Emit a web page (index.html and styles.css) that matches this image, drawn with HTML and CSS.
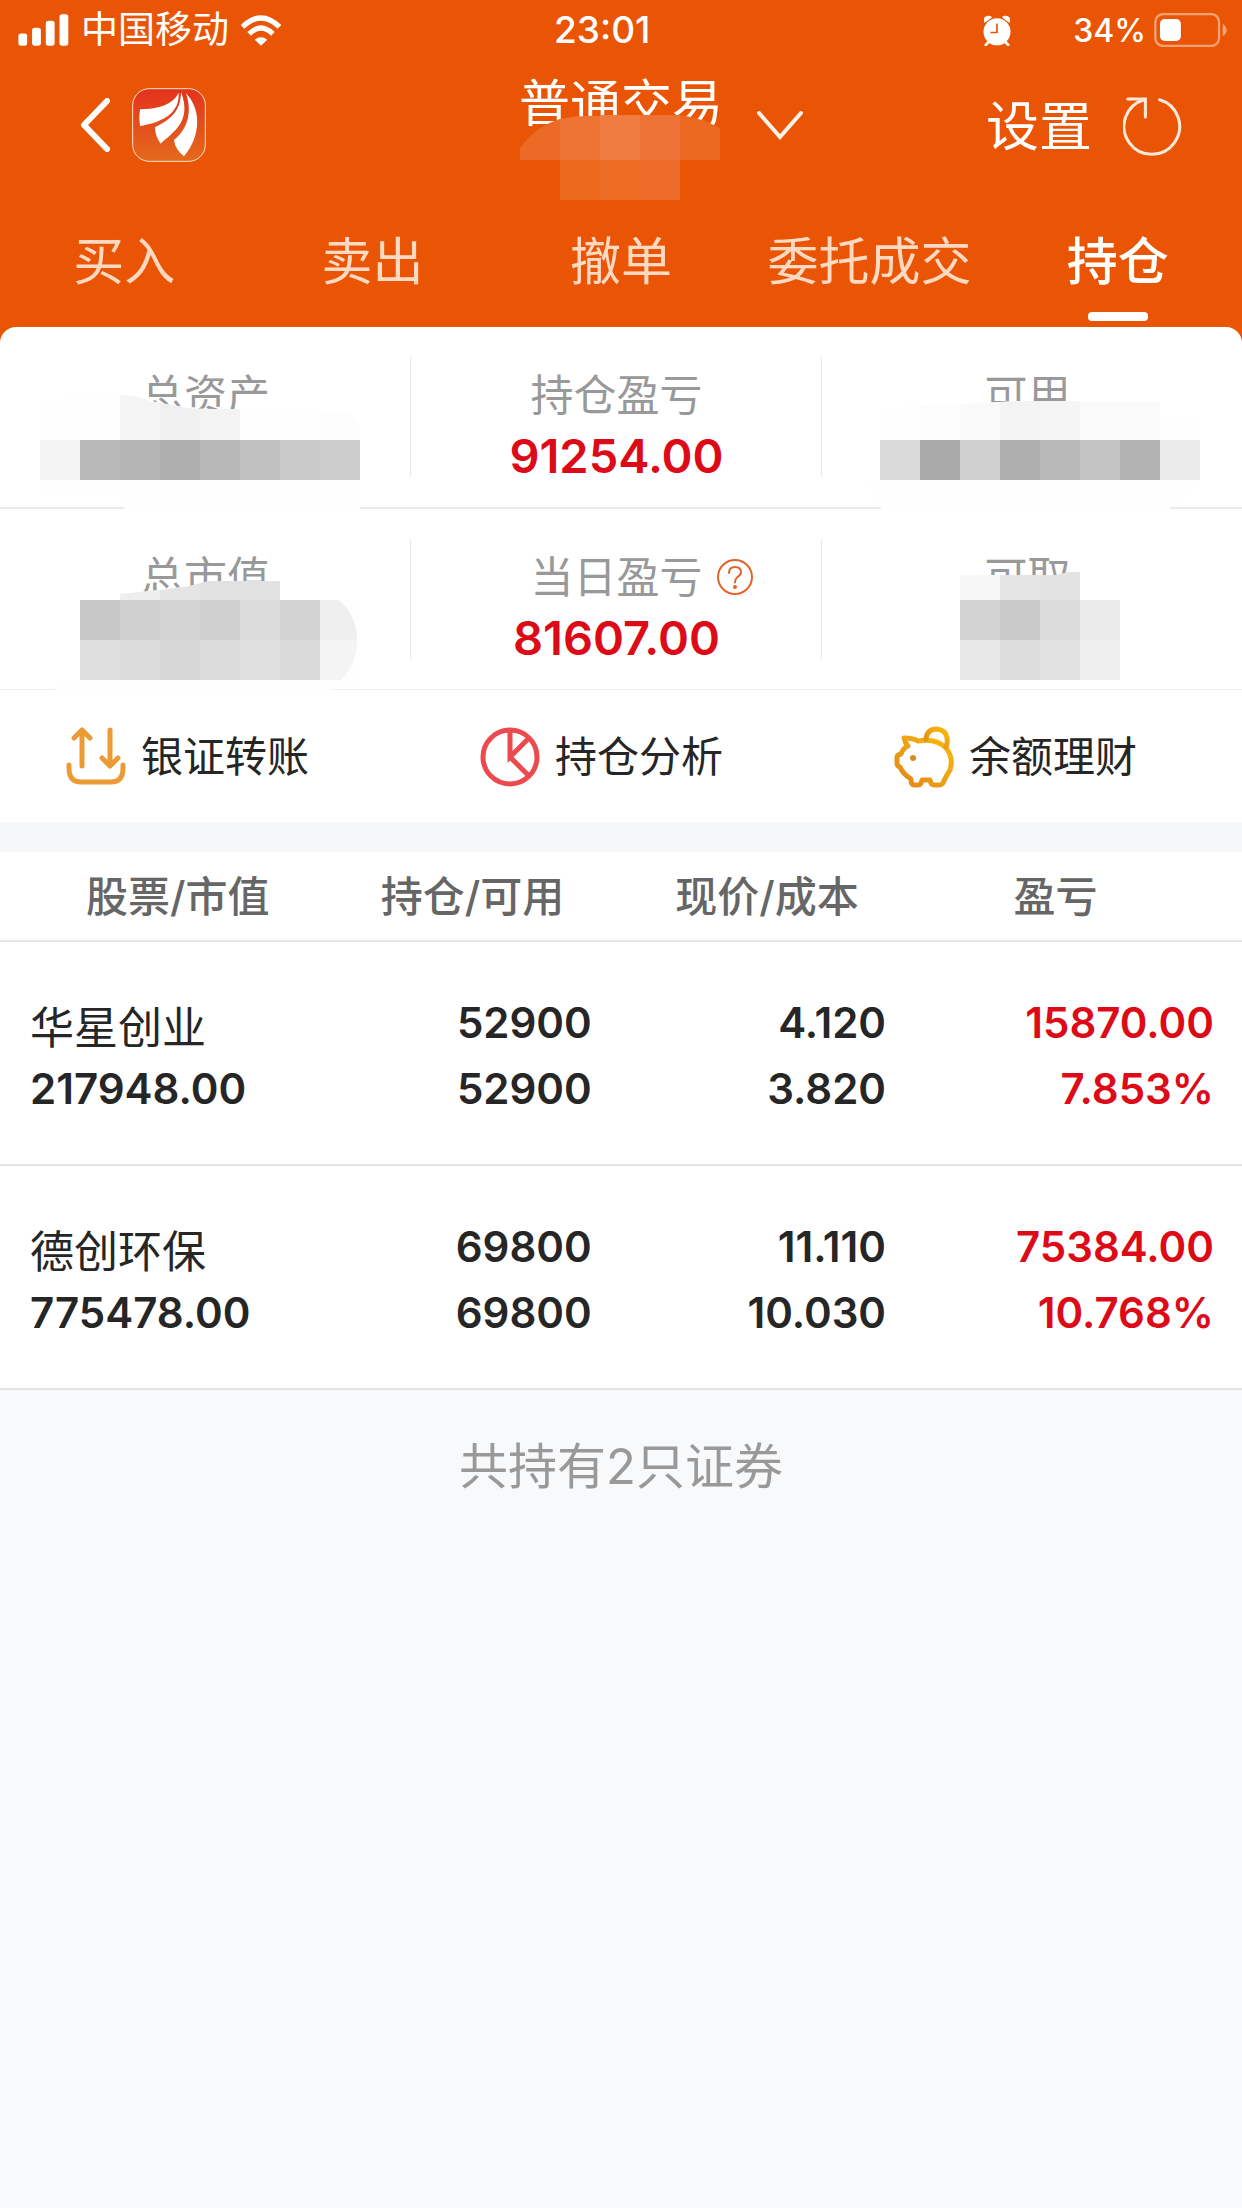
FILE: index.html
```html
<!DOCTYPE html>
<html lang="zh-CN">
<head>
<meta charset="utf-8">
<meta name="viewport" content="width=device-width, initial-scale=1">
<title>普通交易 - 持仓</title>
<link rel="stylesheet" href="styles.css">
</head>
<body>
<header class="top">
  <div class="status">
    <div class="status-left">
      <svg class="signal" viewBox="54 38 154 98" aria-hidden="true"><g fill="#fff"><rect x="54" y="98" width="27" height="37" rx="8"/><rect x="96" y="80" width="27" height="55" rx="8"/><rect x="138" y="59" width="27" height="76" rx="8"/><rect x="180" y="39" width="27" height="96" rx="8"/></g></svg>
      <span class="carrier">中国移动</span>
      <svg class="wifi" viewBox="720 42 126 94" aria-hidden="true"><g fill="none" stroke="#fff" stroke-width="16"><path d="M727 78Q783 24 839 78"/><path d="M747 99Q783 64 819 99"/></g><path d="M764 117Q783 102 802 117L783 135Z" fill="#fff"/></svg>
    </div>
    <time class="clock">23:01</time>
    <div class="status-right">
      <svg class="alarm" viewBox="316 42 84 94" aria-hidden="true"><circle cx="358" cy="93" r="41" fill="#fff"/><path d="M320 66Q314 48 328 45Q338 43 343 49ZM396 66Q402 48 388 45Q378 43 373 49Z" fill="#fff"/><path d="M334 122L324 133M382 122L392 133" stroke="#fff" stroke-width="8" stroke-linecap="round"/><path d="M358 68V95H338" fill="none" stroke="#e95504" stroke-width="5"/></svg>
      <span class="percent">34%</span>
      <svg class="battery" viewBox="822 36 220 102" aria-hidden="true"><rect x="826" y="39" width="192" height="96" rx="24" fill="none" stroke="#fff" stroke-opacity=".45" stroke-width="7"/><rect x="840" y="54" width="63" height="66" rx="14" fill="#fff"/><path d="M1029 68Q1041 76 1041 87T1029 106Z" fill="#fff" fill-opacity=".45"/></svg>
    </div>
  </div>

  <div class="titlebar">
    <div class="title-left">
      <button class="icon-btn" aria-label="返回"><svg class="back" viewBox="0 0 30 54"><path d="M27 3L4 27L27 51" fill="none" stroke="#fff" stroke-width="6" stroke-linecap="round" stroke-linejoin="round"/></svg></button>
      <svg class="logo" viewBox="396 264 222 222" role="img" aria-label="东方财富">
        <defs><linearGradient id="logo-bg" x1="0" y1="0" x2="0" y2="1"><stop offset="0" stop-color="#e3331c"/><stop offset="1" stop-color="#e56a1c"/></linearGradient></defs>
        <rect x="398" y="266" width="218" height="218" rx="50" fill="url(#logo-bg)" stroke="#fbe3cf" stroke-width="3"/>
        <g fill="#fff"><path d="M536 278C518 314 480 326 420 328Q415 352 420 378C476 368 540 346 536 278Z"/><path d="M543 276C542 335 512 358 465 382Q465 408 482 431C516 398 578 366 543 276Z"/><path d="M558 280C580 345 556 394 522 420Q525 448 552 469C592 424 614 340 558 280Z"/></g>
      </svg>
    </div>
    <div class="title-mid">
      <h1 class="title">普通交易</h1>
      <svg class="title-mask" viewBox="520 114 200 86" aria-hidden="true">
        <path d="M520 160V148Q536 126 560 119V160Z" fill="#eb6a25"/>
        <path d="M560 119Q580 115 600 116V160H560Z" fill="#ed7434"/>
        <path d="M600 115H640V160H600Z" fill="#f07c41"/>
        <path d="M640 115H680V160H640Z" fill="#ed7236"/>
        <path d="M680 115Q702 118 720 128V160H680Z" fill="#eb6820"/>
        <path d="M560 160H600V200H560Z" fill="#eb681d"/><path d="M600 160H640V200H600Z" fill="#ec6c24"/><path d="M640 160H680V200H640Z" fill="#ec6b27"/>
      </svg>
    </div>
    <div class="title-right">
      <button class="icon-btn" aria-label="切换账户"><svg class="down" viewBox="0 0 46 30"><path d="M2 2L23 26L44 2" fill="none" stroke="#fff2e8" stroke-width="4" stroke-linecap="round"/></svg></button>
      <button class="settings">设置</button>
      <button class="icon-btn" aria-label="刷新"><svg class="refresh" viewBox="729 290 174 174"><g fill="none" stroke="#ffe9db" stroke-width="9" stroke-linecap="round"><path d="M837 298A82 82 0 1 1 791 298"/><path d="M743 296H795V349"/></g></svg></button>
    </div>
  </div>

  <nav class="tabs">
    <a class="tab" href="#buy">买入</a>
    <a class="tab" href="#sell">卖出</a>
    <a class="tab" href="#cancel">撤单</a>
    <a class="tab" href="#orders">委托成交</a>
    <a class="tab tab-active" href="#positions" aria-current="page">持仓</a>
  </nav>
</header>

<main>
  <section class="panel">
    <div class="summary summary-first">
      <div class="cell">
        <div class="label"><span class="label-text">总资产</span></div>
        <svg class="mask" viewBox="0 327 411 180" aria-hidden="true">
          <path d="M40 400L120 395Q140 396 150 401L178 406Q190 409 215 409L340 412Q352 414 360 424V510H124V490H40Z" fill="#fefefe"/>
          <path d="M120 395Q140 396 150 401L160 403V440H120Z" fill="#f5f5f5"/><path d="M160 403L178 406Q188 409 200 409V440H160Z" fill="#f0f0f0"/><path d="M200 409H240V440H200Z" fill="#f3f3f3"/>
          <path d="M320 412H340Q352 414 360 424V440H320Z" fill="#fcfcfc"/>
          <path d="M40 440H80V480H40Z" fill="#f3f3f3"/><path d="M80 440H120V480H80Z" fill="#b9b9b9"/><path d="M120 440H160V480H120Z" fill="#b4b4b4"/><path d="M160 440H200V480H160Z" fill="#afafaf"/><path d="M200 440H240V480H200Z" fill="#b7b7b7"/><path d="M240 440H280V480H240Z" fill="#c1c1c1"/><path d="M280 440H320V480H280Z" fill="#cacaca"/><path d="M320 440H360V480H320Z" fill="#ccc"/>
        </svg>
      </div>
      <div class="cell">
        <div class="label"><span class="label-text">持仓盈亏</span></div>
        <div class="value">91254.00</div>
      </div>
      <div class="cell">
        <div class="label"><span class="label-text">可用</span></div>
        <svg class="mask" viewBox="822 327 411 180" aria-hidden="true">
          <path d="M880 408L960 404L1000 402L1020 401H1160V420H1200V480L1168 510H882L866 480H880Z" fill="#fefefe"/>
          <path d="M920 406L960 404V440H920Z" fill="#fcfcfc"/><path d="M960 404L1000 402V440H960Z" fill="#f9f9f9"/><path d="M1000 402L1020 401H1040V440H1000Z" fill="#f3f3f3"/><path d="M1040 401H1080V440H1040Z" fill="#f5f5f5"/><path d="M1080 401H1160V440H1080Z" fill="#fbfbfb"/>
          <path d="M880 440H920V480H880Z" fill="#dadada"/><path d="M920 440H960V480H920Z" fill="#aaa"/><path d="M960 440H1000V480H960Z" fill="#cfcfcf"/><path d="M1000 440H1040V480H1000Z" fill="#afafaf"/><path d="M1040 440H1080V480H1040Z" fill="#b9b9b9"/><path d="M1080 440H1120V480H1080Z" fill="#c4c4c4"/><path d="M1120 440H1160V480H1120Z" fill="#b3b3b3"/><path d="M1160 440H1200V480H1160Z" fill="#eaeaea"/>
        </svg>
      </div>
    </div>
    <div class="summary">
      <div class="cell">
        <div class="label"><span class="label-text">总市值</span></div>
        <svg class="mask" viewBox="0 509 411 180" aria-hidden="true">
          <path d="M120 594L160 590L190 586L210 581H280V600H360V680L328 691H55V680H80V600H120Z" fill="#fefefe"/>
          <path d="M120 594L160 590V600H120Z" fill="#eee"/><path d="M160 590L190 586L200 583V600H160Z" fill="#e5e5e5"/><path d="M200 583L210 581H240V600H200Z" fill="#e1e1e1"/><path d="M240 581H280V600H240Z" fill="#e2e2e2"/>
          <path d="M80 600H120V640H80Z" fill="#c8c8c8"/><path d="M120 600H160V640H120Z" fill="#d0d0d0"/><path d="M160 600H200V640H160Z" fill="#d4d4d4"/><path d="M200 600H240V640H200Z" fill="#d0d0d0"/><path d="M240 600H280V640H240Z" fill="#dbdbdb"/><path d="M280 600H320V640H280Z" fill="#d3d3d3"/><path d="M320 600H339Q357 616 357 640H320Z" fill="#efefef"/>
          <path d="M80 640H120V680H80Z" fill="#dedede"/><path d="M120 640H160V680H120Z" fill="#dbdbdb"/><path d="M160 640H200V680H160Z" fill="#d7d7d7"/><path d="M200 640H240V680H200Z" fill="#dbdbdb"/><path d="M240 640H280V680H240Z" fill="#e0e0e0"/><path d="M280 640H320V680H280Z" fill="#dadada"/><path d="M320 640H357Q357 664 341 680H320Z" fill="#f4f4f4"/>
        </svg>
      </div>
      <div class="cell">
        <div class="label"><span class="label-text">当日盈亏</span>
          <button class="icon-btn help-btn" aria-label="当日盈亏说明"><svg class="help" viewBox="0 0 36 36"><g fill="none" stroke="#e2642a" stroke-width="2"><circle cx="18" cy="18" r="17"/><path d="M12 14Q12 8 18 8T24 13Q24 16 20 18.500Q18 20 18 23.500" stroke-linecap="round"/></g><circle cx="18" cy="28" r="2" fill="#e2642a"/></svg></button>
        </div>
        <div class="value">81607.00</div>
      </div>
      <div class="cell">
        <div class="label"><span class="label-text">可取</span></div>
        <svg class="mask" viewBox="822 509 411 180" aria-hidden="true">
          <path d="M960 575H1000V600H960Z" fill="#f7f7f7"/><path d="M1000 575H1040V600H1000Z" fill="#e4e4e4"/><path d="M1040 575H1056L1068 572H1080V600H1040Z" fill="#e3e3e3"/>
          <path d="M960 600H1000V640H960Z" fill="#d2d2d2"/><path d="M1000 600H1040V640H1000Z" fill="#c9c9c9"/><path d="M1040 600H1080V640H1040Z" fill="#dcdcdc"/><path d="M1080 600H1120V640H1080Z" fill="#eaeaea"/>
          <path d="M960 640H1000V680H960Z" fill="#e8e8e8"/><path d="M1000 640H1040V680H1000Z" fill="#ddd"/><path d="M1040 640H1080V680H1040Z" fill="#e2e2e2"/><path d="M1080 640H1120V680H1080Z" fill="#efefef"/>
        </svg>
      </div>
    </div>
    <div class="actions">
      <a class="action" href="#transfer"><svg class="action-icon" viewBox="0 0 60 62" aria-hidden="true"><g fill="none" stroke="#ec9b34" stroke-width="5" stroke-linecap="round" stroke-linejoin="round"><path d="M16 40V4M8 12L16 4L24 12M44 4V40M36 32L44 40L52 32"/><path d="M3 39V42Q3 56 15 56H45Q57 56 57 42V39"/></g></svg>银证转账</a>
      <a class="action" href="#analysis"><svg class="action-icon" viewBox="0 0 60 62" aria-hidden="true"><g fill="none" stroke="#ec4a4e" stroke-width="5"><circle cx="30" cy="31" r="27"/><path d="M30 4V31L49 12M30 31L49 50"/></g></svg>持仓分析</a>
      <a class="action" href="#wealth"><svg class="action-icon" viewBox="0 0 60 62" aria-hidden="true"><defs><linearGradient id="pig" x1="0" y1="1" x2="1" y2="0"><stop offset="0" stop-color="#e2851a"/><stop offset="1" stop-color="#f8bb0c"/></linearGradient></defs><g fill="none" stroke="url(#pig)" stroke-width="5" stroke-linejoin="round" stroke-linecap="round"><path d="M10 12Q20 12 24 15Q42 12 52 22Q60 32 56 44Q51 52 49 57Q48 59 44 59H40Q37 59 36 54H28Q27 59 24 59H20Q17 59 17 53Q9 48 6 41Q3 40 3 37V31Q3 29 7 28Q9 22 14 20Q11 17 10 12Z"/><path d="M32 13Q33 3 43 3Q52 4 53 12Q54 17 52 21"/></g><circle cx="19" cy="32" r="3" fill="#dc8a1e"/></svg>余额理财</a>
    </div>
  </section>

  <table class="holdings">
    <colgroup><col class="col-name"><col class="col-mid"><col class="col-mid"><col class="col-last"></colgroup>
    <thead>
      <tr><th>股票/市值</th><th>持仓/可用</th><th>现价/成本</th><th>盈亏</th></tr>
    </thead>
    <tbody>
      <tr>
        <td><span class="stock">华星创业</span><span class="num">217948.00</span></td>
        <td><span class="num">52900</span><span class="num">52900</span></td>
        <td><span class="num">4.120</span><span class="num">3.820</span></td>
        <td><span class="num">15870.00</span><span class="num">7.853%</span></td>
      </tr>
      <tr>
        <td><span class="stock">德创环保</span><span class="num">775478.00</span></td>
        <td><span class="num">69800</span><span class="num">69800</span></td>
        <td><span class="num">11.110</span><span class="num">10.030</span></td>
        <td><span class="num">75384.00</span><span class="num">10.768%</span></td>
      </tr>
    </tbody>
  </table>
  <p class="total">共持有2只证券</p>
</main>
</body>
</html>
```
FILE: styles.css
```css
* { box-sizing: border-box; }

body {
  margin: 0;
  background: #f8f9fb;
  color: #262626;
  font-family: Inter, "Noto Sans CJK SC", sans-serif;
}

svg { display: block; flex: none; }
a { color: inherit; text-decoration: none; }
button { margin: 0; padding: 0; border: 0; background: none; color: inherit; font: inherit; }
.icon-btn { display: block; }

/* Orange header */
.top {
  background: #e95504;
  color: #fff;
  padding-bottom: 16px;
  margin-bottom: -16px;
}

.status {
  display: flex;
  align-items: center;
  height: 60px;
  padding: 0 15px 0 18px;
}
.status-left { display: flex; align-items: center; width: 536px; }
.signal { width: 51px; height: 32px; margin-right: 12px; }
.carrier { font-size: 37px; line-height: 60px; }
.wifi { width: 42px; height: 31px; margin-left: 11px; }
.clock { font-size: 37px; line-height: 60px; font-weight: 500; }
.status-right { display: flex; align-items: center; margin-left: auto; }
.alarm { width: 28px; height: 31px; }
.percent { font-size: 32px; font-weight: 500; margin: 0 8px 0 62px; }
.battery { width: 73px; height: 34px; }

.titlebar {
  display: grid;
  grid-template-columns: 1fr auto 1fr;
  height: 150px;
}
.title-left { display: flex; align-items: center; height: 130px; padding-left: 80px; }
.back { width: 30px; height: 54px; }
.logo { width: 74px; height: 74px; margin-left: 22px; }
.title-mid { position: relative; }
.title { margin: 0; padding-top: 14px; font-size: 51px; line-height: 60px; font-weight: 400; }
.title-mask { position: absolute; left: 1px; top: 54px; width: 200px; height: 86px; }
.title-right { display: flex; align-items: center; height: 132px; padding: 0 60px 0 34px; }
.down { width: 46px; height: 30px; }
.settings { margin: 0 31px 0 auto; padding-top: 2px; font-size: 53px; line-height: 60px; }
.refresh { width: 59px; height: 59px; }

.tabs {
  display: grid;
  grid-template-columns: repeat(5, 1fr);
  height: 117px;
}
.tab {
  display: flex;
  flex-direction: column;
  align-items: center;
  padding-top: 22px;
  font-size: 51px;
  line-height: 60px;
  color: #ffd9c2;
}
.tab-active { color: #fff; font-weight: 500; }
.tab-active::after {
  content: "";
  width: 60px;
  height: 9px;
  margin-top: 20px;
  border-radius: 4px;
  background: #fff;
}

/* Account summary */
.panel {
  background: #fff;
  border-radius: 16px 16px 0 0;
  border-bottom: 30px solid #f6f7f9;
}
.summary {
  display: grid;
  grid-template-columns: repeat(3, 1fr);
  padding-right: 9px;
  border-bottom: 1px solid #ececec;
}
.summary-first { border-bottom: 2px solid #ebebeb; }
.cell {
  position: relative;
  height: 180px;
  padding-top: 38px;
  background: linear-gradient(#e9e9e9, #e9e9e9) right 30px / 1px 120px no-repeat;
}
.cell:last-child { background: none; }
.label {
  display: grid;
  grid-template-columns: 1fr auto 1fr;
  align-items: center;
  font-size: 43px;
  line-height: 60px;
  color: #999;
}
.label-text { grid-column: 2; }
.help-btn { justify-self: start; margin-left: 14px; }
.help { width: 36px; height: 36px; }
.value {
  text-align: center;
  font-size: 47px;
  line-height: 62px;
  font-weight: 600;
  color: #dc0b17;
}
.mask { position: absolute; inset: 0; width: 100%; height: 180px; overflow: visible; }

.actions { display: grid; grid-template-columns: repeat(3, 1fr); height: 132px; padding-top: 2px; }
.action {
  display: flex;
  align-items: center;
  gap: 15px;
  padding-left: 66px;
  font-size: 42px;
  line-height: 60px;
}
.action-icon { width: 60px; height: 62px; }

/* Holdings */
.holdings {
  width: 100%;
  table-layout: fixed;
  border-collapse: separate;
  border-spacing: 0;
  background: #fff;
}
.col-name { width: 26.2%; }
.col-mid { width: 23.7%; }
.col-last { width: 26.4%; }
.holdings th {
  height: 90px;
  padding: 2px 0 0;
  border-bottom: 2px solid #e6e6e6;
  font-size: 42px;
  line-height: 60px;
  font-weight: 500;
  color: #666;
}
.holdings th:first-child { padding-left: 30px; }
.holdings th:last-child { padding-right: 45px; }
.holdings td {
  padding: 48px 28px 42px 0;
  border-bottom: 2px solid #e3e3e3;
  text-align: right;
  vertical-align: top;
}
.holdings td:first-child { padding-left: 30px; padding-right: 0; text-align: left; }
.holdings td:last-child { color: #dc0b17; }
.stock, .num { display: block; line-height: 66px; }
.stock { padding-top: 10px; font-size: 44px; line-height: 56px; }
.num { font-size: 42px; font-weight: 600; }

.total {
  margin: 0;
  padding: 44px 0;
  text-align: center;
  font-size: 49px;
  line-height: 66px;
  color: #999;
}
```
